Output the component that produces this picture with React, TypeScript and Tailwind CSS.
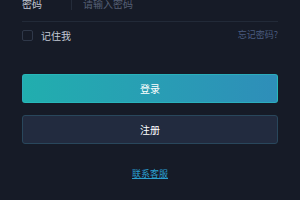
import React from 'react';

export default function App() {
  return (
    <div
      className="w-[300px] h-[200px] overflow-hidden bg-[#161b27] px-[22px]"
      style={{ fontFamily: '"Noto Sans CJK SC", "Noto Sans", sans-serif' }}
    >
      {/* password row */}
      <div className="mt-[-15px] h-[37px] flex items-center border-b border-[#222a38]">
        <span className="w-[41px] text-[10px] text-[#c3cad6]">密码</span>
        <span className="w-px h-[14px] bg-[#242c3a] mx-[8px]" />
        <span className="ml-[3px] text-[10px] text-[#566076]">请输入密码</span>
      </div>

      {/* remember */}
      <div className="h-[26px] flex items-center justify-between">
        <label className="flex items-center">
          <span className="w-[11px] h-[11px] rounded-[2px] border border-[#2f3849]" />
          <span className="ml-[8px] text-[10px] text-[#c3cad6]">记住我</span>
        </label>
        <span className="text-[9px] text-[#4b5d80]">忘记密码?</span>
      </div>

      <button className="mt-[26px] w-full h-[29px] rounded-[3px] border border-[#2cc0c0]/60 bg-gradient-to-r from-[#21aeae] to-[#2e8eb9] text-white text-[10px]">
        登录
      </button>
      <button className="mt-[12px] w-full h-[29px] rounded-[3px] border border-[#29475c] bg-[#222b3f] text-white text-[10px]">
        注册
      </button>

      <div className="mt-[24px] h-[12px] flex justify-center">
        <a className="text-[9px] leading-[12px] text-[#2a9fd0] underline">联系客服</a>
      </div>
    </div>
  );
}
